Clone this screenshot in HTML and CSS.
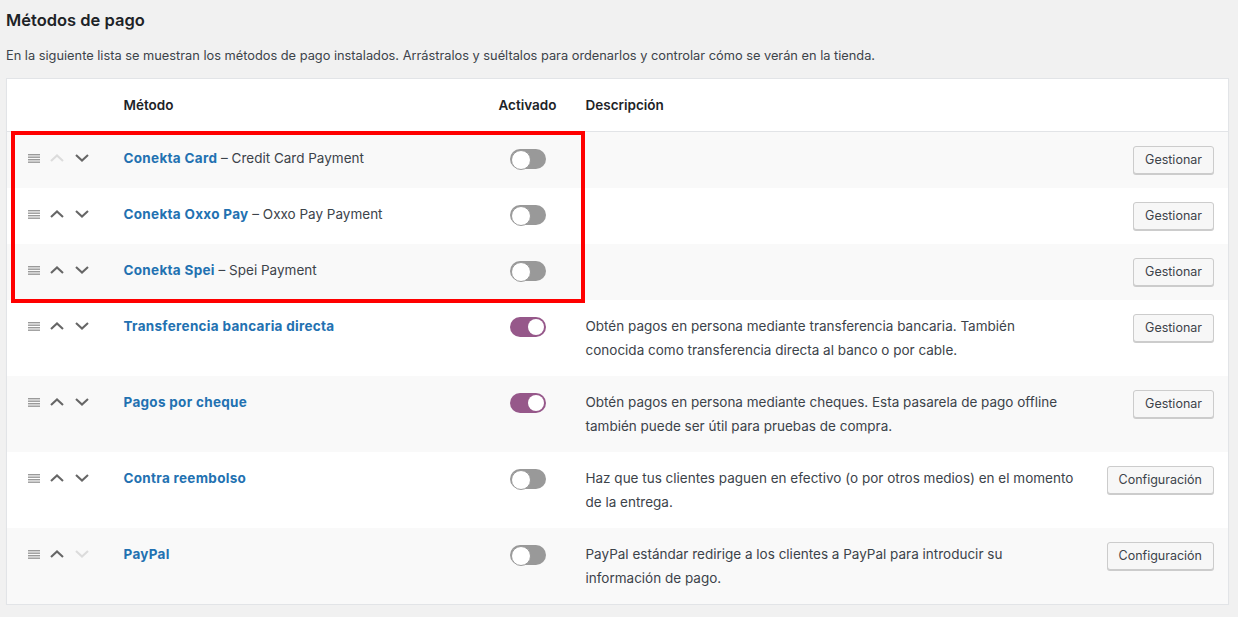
FILE: index.html
```html
<!DOCTYPE html>
<html lang="es">
<head>
<meta charset="utf-8">
<title>Métodos de pago</title>
<link rel="stylesheet" href="styles.css">
</head>
<body>
<div class="page">
  <h2 class="title">Métodos de pago</h2>
  <p class="intro">En la siguiente lista se muestran los métodos de pago instalados. Arrástralos y suéltalos para ordenarlos y controlar cómo se verán en la tienda.</p>

  <div class="table-wrap">
    <table class="gateways">
      <colgroup>
        <col class="c-sort"><col class="c-name"><col class="c-status"><col class="c-desc"><col class="c-action">
      </colgroup>
      <thead>
        <tr>
          <th></th>
          <th>Método</th>
          <th>Activado</th>
          <th>Descripción</th>
          <th></th>
        </tr>
      </thead>
      <tbody>
        <tr class="alt">
          <td class="sort"><div class="sort-icons">
            <svg class="handle" viewBox="0 0 12 9" width="12" height="9"><rect x="0" y="0" width="12" height="1.4"/><rect x="0" y="2.5" width="12" height="1.4"/><rect x="0" y="5" width="12" height="1.4"/><rect x="0" y="7.5" width="12" height="1.4"/></svg>
            <svg class="chev disabled" viewBox="0 0 14 8" width="14" height="8"><path d="M1 7 L7 1.5 L13 7"/></svg>
            <svg class="chev" viewBox="0 0 14 8" width="14" height="8"><path d="M1 1 L7 6.5 L13 1"/></svg>
          </div></td>
          <td class="name"><a href="#">Conekta Card</a> – Credit Card Payment</td>
          <td class="status"><span class="toggle off"></span></td>
          <td class="desc"></td>
          <td class="action"><button class="btn">Gestionar</button></td>
        </tr>
        <tr>
          <td class="sort"><div class="sort-icons">
            <svg class="handle" viewBox="0 0 12 9" width="12" height="9"><rect x="0" y="0" width="12" height="1.4"/><rect x="0" y="2.5" width="12" height="1.4"/><rect x="0" y="5" width="12" height="1.4"/><rect x="0" y="7.5" width="12" height="1.4"/></svg>
            <svg class="chev" viewBox="0 0 14 8" width="14" height="8"><path d="M1 7 L7 1.5 L13 7"/></svg>
            <svg class="chev" viewBox="0 0 14 8" width="14" height="8"><path d="M1 1 L7 6.5 L13 1"/></svg>
          </div></td>
          <td class="name"><a href="#">Conekta Oxxo Pay</a> – Oxxo Pay Payment</td>
          <td class="status"><span class="toggle off"></span></td>
          <td class="desc"></td>
          <td class="action"><button class="btn">Gestionar</button></td>
        </tr>
        <tr class="alt">
          <td class="sort"><div class="sort-icons">
            <svg class="handle" viewBox="0 0 12 9" width="12" height="9"><rect x="0" y="0" width="12" height="1.4"/><rect x="0" y="2.5" width="12" height="1.4"/><rect x="0" y="5" width="12" height="1.4"/><rect x="0" y="7.5" width="12" height="1.4"/></svg>
            <svg class="chev" viewBox="0 0 14 8" width="14" height="8"><path d="M1 7 L7 1.5 L13 7"/></svg>
            <svg class="chev" viewBox="0 0 14 8" width="14" height="8"><path d="M1 1 L7 6.5 L13 1"/></svg>
          </div></td>
          <td class="name"><a href="#">Conekta Spei</a> – Spei Payment</td>
          <td class="status"><span class="toggle off"></span></td>
          <td class="desc"></td>
          <td class="action"><button class="btn">Gestionar</button></td>
        </tr>
        <tr>
          <td class="sort"><div class="sort-icons">
            <svg class="handle" viewBox="0 0 12 9" width="12" height="9"><rect x="0" y="0" width="12" height="1.4"/><rect x="0" y="2.5" width="12" height="1.4"/><rect x="0" y="5" width="12" height="1.4"/><rect x="0" y="7.5" width="12" height="1.4"/></svg>
            <svg class="chev" viewBox="0 0 14 8" width="14" height="8"><path d="M1 7 L7 1.5 L13 7"/></svg>
            <svg class="chev" viewBox="0 0 14 8" width="14" height="8"><path d="M1 1 L7 6.5 L13 1"/></svg>
          </div></td>
          <td class="name"><a href="#">Transferencia bancaria directa</a></td>
          <td class="status"><span class="toggle on"></span></td>
          <td class="desc">Obtén pagos en persona mediante transferencia bancaria. También conocida como transferencia directa al banco o por cable.</td>
          <td class="action"><button class="btn">Gestionar</button></td>
        </tr>
        <tr class="alt">
          <td class="sort"><div class="sort-icons">
            <svg class="handle" viewBox="0 0 12 9" width="12" height="9"><rect x="0" y="0" width="12" height="1.4"/><rect x="0" y="2.5" width="12" height="1.4"/><rect x="0" y="5" width="12" height="1.4"/><rect x="0" y="7.5" width="12" height="1.4"/></svg>
            <svg class="chev" viewBox="0 0 14 8" width="14" height="8"><path d="M1 7 L7 1.5 L13 7"/></svg>
            <svg class="chev" viewBox="0 0 14 8" width="14" height="8"><path d="M1 1 L7 6.5 L13 1"/></svg>
          </div></td>
          <td class="name"><a href="#">Pagos por cheque</a></td>
          <td class="status"><span class="toggle on"></span></td>
          <td class="desc">Obtén pagos en persona mediante cheques. Esta pasarela de pago offline también puede ser útil para pruebas de compra.</td>
          <td class="action"><button class="btn">Gestionar</button></td>
        </tr>
        <tr>
          <td class="sort"><div class="sort-icons">
            <svg class="handle" viewBox="0 0 12 9" width="12" height="9"><rect x="0" y="0" width="12" height="1.4"/><rect x="0" y="2.5" width="12" height="1.4"/><rect x="0" y="5" width="12" height="1.4"/><rect x="0" y="7.5" width="12" height="1.4"/></svg>
            <svg class="chev" viewBox="0 0 14 8" width="14" height="8"><path d="M1 7 L7 1.5 L13 7"/></svg>
            <svg class="chev" viewBox="0 0 14 8" width="14" height="8"><path d="M1 1 L7 6.5 L13 1"/></svg>
          </div></td>
          <td class="name"><a href="#">Contra reembolso</a></td>
          <td class="status"><span class="toggle off"></span></td>
          <td class="desc">Haz que tus clientes paguen en efectivo (o por otros medios) en el momento de la entrega.</td>
          <td class="action"><button class="btn">Configuración</button></td>
        </tr>
        <tr class="alt">
          <td class="sort"><div class="sort-icons">
            <svg class="handle" viewBox="0 0 12 9" width="12" height="9"><rect x="0" y="0" width="12" height="1.4"/><rect x="0" y="2.5" width="12" height="1.4"/><rect x="0" y="5" width="12" height="1.4"/><rect x="0" y="7.5" width="12" height="1.4"/></svg>
            <svg class="chev" viewBox="0 0 14 8" width="14" height="8"><path d="M1 7 L7 1.5 L13 7"/></svg>
            <svg class="chev disabled" viewBox="0 0 14 8" width="14" height="8"><path d="M1 1 L7 6.5 L13 1"/></svg>
          </div></td>
          <td class="name"><a href="#">PayPal</a></td>
          <td class="status"><span class="toggle off"></span></td>
          <td class="desc">PayPal estándar redirige a los clientes a PayPal para introducir su información de pago.</td>
          <td class="action"><button class="btn">Configuración</button></td>
        </tr>
      </tbody>
    </table>
    <div class="highlight"></div>
  </div>
</div>
</body>
</html>
```

FILE: styles.css
```css
* { box-sizing: border-box; }

html, body {
  margin: 0;
  background: #f1f1f1;
}

body {
  font-family: Inter, "Noto Sans", "Liberation Sans", sans-serif;
  color: #3c434a;
  font-size: 13px;
}

.page {
  padding: 0 9px 0 6px;
}

.title {
  margin: 9px 0 0;
  font-size: 16.5px;
  line-height: 22px;
  font-weight: 600;
  color: #1d2327;
}

.intro {
  margin: 15px 0 0;
  font-size: 12.8px;
  line-height: 20px;
}

.table-wrap {
  position: relative;
  margin-top: 12px;
}

.gateways {
  width: 100%;
  table-layout: fixed;
  border-collapse: collapse;
  background: #fff;
  border: 1px solid #e2e4e7;
  box-shadow: 0 1px 1px rgba(0,0,0,0.04);
}

.c-sort { width: 107px; }
.c-name { width: 375px; }
.c-status { width: 87px; }
.c-desc { width: 508px; }
.c-action { width: auto; }

.gateways th {
  text-align: left;
  font-weight: 600;
  font-size: 13.5px;
  color: #1d2327;
  padding: 14px 10px;
  line-height: 24px;
  border-bottom: 1px solid #e2e4e7;
}

.gateways td {
  padding: 14px 10px;
  line-height: 24px;
  font-size: 13.5px;
  vertical-align: top;
}

.gateways tr.alt td {
  background: #f9f9f9;
}

.sort {
  padding-left: 21px !important;
}

.sort-icons {
  display: flex;
  align-items: center;
  height: 24px;
}

.handle {
  fill: #9a9a9a;
  margin-right: 10px;
  flex: none;
}

.chev {
  fill: none;
  stroke: #666;
  stroke-width: 2.1;
  margin-right: 11px;
  flex: none;
}

.chev.disabled {
  stroke: #dcdcdc;
}

.name a {
  color: #2271b1;
  font-weight: 700;
  letter-spacing: 0.3px;
  text-decoration: none;
}

.status {
  padding-left: 21px !important;
}

.toggle {
  display: block;
  position: relative;
  width: 36px;
  height: 20px;
  border-radius: 10px;
  margin-top: 3px;
}

.toggle::after {
  content: "";
  position: absolute;
  top: 2px;
  width: 16px;
  height: 16px;
  border-radius: 50%;
  background: #fff;
}

.toggle.off {
  background: #999;
}

.toggle.off::after {
  left: 1px;
  top: 1px;
  width: 18px;
  height: 18px;
  border: 1px solid #999;
}

.toggle.on {
  background: #96588a;
}

.toggle.on::after {
  right: 2px;
}

.desc {
  color: #3c434a;
}

.action {
  text-align: right;
  padding-right: 14px !important;
}

.btn {
  font-family: inherit;
  font-size: 12.5px;
  color: #3c434a;
  background: #f7f7f7;
  border: 1px solid #cccccc;
  border-radius: 3px;
  box-shadow: 0 1px 0 #cccccc;
  height: 28px;
  padding: 0 11px;
  line-height: 26px;
  cursor: pointer;
  vertical-align: top;
}

.highlight {
  position: absolute;
  left: 5px;
  top: 53px;
  width: 574px;
  height: 172px;
  border: 4px solid #ff0000;
  pointer-events: none;
}
```
